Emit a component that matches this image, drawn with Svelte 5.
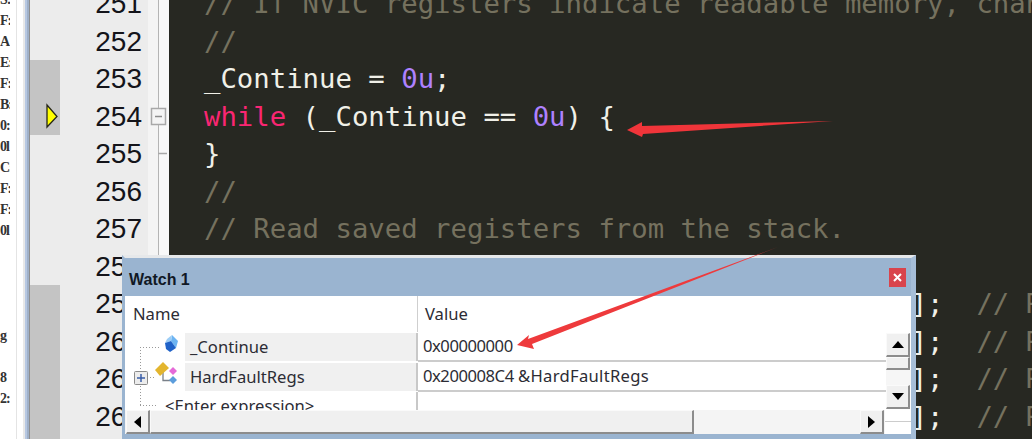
<script lang="ts">
	const disasm = ['S:', 'F:', 'A', 'E:', 'F:', 'B:', '0:', '0l', 'C:', 'F:', 'F:', '0l', '', '', '', '', 'g', '', '8', '2:', ''];

	const regLine = (i: number, note: string) => [
		[`HardFaultRegs.SavedRegs.r${i}       = pStack[${i}];  `, ''],
		[`// Register ${note}`, 'comment']
	];

	const lines = [
		{ n: 251, code: [['// If NVIC registers indicate readable memory, change the variable value to != 0 to continue execution.', 'comment']] },
		{ n: 252, code: [['//', 'comment']] },
		{ n: 253, mark: true, code: [['_Continue = ', ''], ['0u', 'literal'], [';', '']] },
		{ n: 254, mark: true, current: true, fold: true, code: [['while', 'keyword'], [' (_Continue == ', ''], ['0u', 'literal'], [') {', '']] },
		{ n: 255, foldEnd: true, code: [['}', '']] },
		{ n: 256, code: [['//', 'comment']] },
		{ n: 257, code: [['// Read saved registers from the stack.', 'comment']] },
		{ n: 258, code: [['//', 'comment']] },
		{ n: 259, mark: true, code: regLine(0, 'R0') },
		{ n: 260, mark: true, code: regLine(1, 'R1') },
		{ n: 261, mark: true, code: regLine(2, 'R2') },
		{ n: 262, mark: true, code: regLine(3, 'R3') },
		{ n: 263, mark: true, code: regLine(4, 'R12') }
	];
</script>

<div class="ide">
	<div class="disasm">
		{#each disasm as row}
			<div class="disasm-row">{row}</div>
		{/each}
	</div>
	<div class="sep"></div>

	<div class="editor">
		{#each lines as line}
			<div class="line">
				<div class="mark" class:on={line.mark}>
					{#if line.current}
						<svg viewBox="0 0 30 37" width="30" height="37">
							<polygon points="17,7 27,18.5 17,29" fill="#ffff00" stroke="#26261a" stroke-width="1.3" />
						</svg>
					{/if}
				</div>
				<div class="lineno">{line.n}</div>
				<div class="fold">
					{#if line.fold}
						<svg viewBox="0 0 21 37" width="21" height="37">
							<rect x="3.5" y="10.5" width="14" height="16" fill="#f4f4f4" stroke="#a8a8a8" stroke-width="1.5" />
							<line x1="7" y1="18.5" x2="14" y2="18.5" stroke="#8c8c8c" stroke-width="1.5" />
						</svg>
					{:else if line.foldEnd}
						<svg viewBox="0 0 21 37" width="21" height="37">
							<line x1="10" y1="18.5" x2="19" y2="18.5" stroke="#a8a8a8" stroke-width="1.5" />
						</svg>
					{/if}
				</div>
				<div class="code">{#each line.code as [text, kind]}<span class={kind}>{text}</span>{/each}</div>
			</div>
		{/each}
	</div>

	<div class="watch">
		<div class="title">
			<span>Watch 1</span>
			<button class="close" aria-label="Close">
				<svg viewBox="0 0 9 9" width="9" height="9">
					<path d="M1 1 L8 8 M8 1 L1 8" stroke="#fff" stroke-width="2" />
				</svg>
			</button>
		</div>
		<div class="body">
			<div class="list">
				<div class="table">
					<div class="head">
						<div class="head-name">Name</div>
						<div class="head-value">Value</div>
					</div>
					<div class="row">
						<div class="tree">
							<svg viewBox="0 0 60 30" width="60" height="30">
								<path d="M15.5 15 V30 M15 15.5 H36" stroke="#999" stroke-dasharray="1 2" fill="none" />
								<polygon points="47,3 53,9 51,16 46,9" fill="#6db4f2" />
								<polygon points="47,3 46,9 40,11 42,7" fill="#9ccdf6" />
								<polygon points="40,11 46,9 51,16 45,20 41,17" fill="#1f62c8" />
							</svg>
						</div>
						<div class="label">_Continue</div>
						<div class="value"><span class="hex">0x00000000</span></div>
					</div>
					<div class="row">
						<div class="tree">
							<svg viewBox="0 0 60 30" width="60" height="30">
								<path d="M15.5 0 V30 M22 15.5 H31" stroke="#999" stroke-dasharray="1 2" fill="none" />
								<rect x="9.5" y="9.5" width="13" height="13" rx="1" fill="#ececec" stroke="#8a8a8a" />
								<path d="M12 16 H20 M16 12 V20" stroke="#3a5ea8" stroke-width="1.5" />
								<path d="M38 9 V18.5 H45" stroke="#7a8088" stroke-width="1.3" fill="none" />
								<polygon points="38,0 44,6 35,14 30,8" fill="#e3b52e" />
								<polygon points="48,5 52,9 48,13 44,9" fill="#e56ad8" />
								<polygon points="48,14 52,18 48,22 44,18" fill="#5c9ddc" />
							</svg>
						</div>
						<div class="label">HardFaultRegs</div>
						<div class="value"><span class="hex">0x200008C4</span> <span class="ref">&amp;HardFaultRegs</span></div>
					</div>
					<div class="row last">
						<div class="tree">
							<svg viewBox="0 0 60 30" width="60" height="30">
								<path d="M15.5 0 V13 M15 13.5 H33" stroke="#999" stroke-dasharray="1 2" fill="none" />
							</svg>
						</div>
						<div class="label">&lt;Enter expression&gt;</div>
						<div class="value"></div>
					</div>
				</div>
				<div class="vscroll">
					<div class="btn v">
						<svg viewBox="0 0 12 7" width="12" height="7"><polygon points="6,0 12,7 0,7" fill="#000" /></svg>
					</div>
					<div class="btn thumb-v"></div>
					<div class="track-v"></div>
					<div class="btn v">
						<svg viewBox="0 0 12 7" width="12" height="7"><polygon points="0,0 12,0 6,7" fill="#000" /></svg>
					</div>
				</div>
			</div>
			<div class="hscroll">
				<div class="btn h">
					<svg viewBox="0 0 7 12" width="7" height="12"><polygon points="0,6 7,0 7,12" fill="#000" /></svg>
				</div>
				<div class="btn thumb-h"></div>
				<div class="track-h"></div>
				<div class="btn h">
					<svg viewBox="0 0 7 12" width="7" height="12"><polygon points="7,6 0,0 0,12" fill="#000" /></svg>
				</div>
				<div class="corner"></div>
			</div>
		</div>
	</div>

	<svg class="arrows" viewBox="0 0 1032 439" width="1032" height="439">
		<polygon points="627,130 642,122 642,126 833,121 643,134 642,137" fill="#f0353a" />
		<polygon points="517,345 529,335 528,339 778,247 532,344 534,349" fill="#ee3a3c" />
	</svg>
</div>

<style>
	:global(body) {
		margin: 0;
		background: #fff;
	}

	.ide {
		position: relative;
		display: flex;
		width: 1032px;
		height: 439px;
		overflow: hidden;
		background: #fff;
	}

	.disasm {
		width: 10px;
		flex-shrink: 0;
		margin-top: -11px;
		overflow: hidden;
		font-family: 'Liberation Serif', serif;
		font-size: 14px;
		font-weight: bold;
		letter-spacing: -1px;
		color: #333;
	}

	.disasm-row {
		height: 21px;
		line-height: 21px;
		white-space: nowrap;
	}

	.sep {
		width: 20px;
		flex-shrink: 0;
		background: linear-gradient(
			to right,
			#fff 0 6px,
			#e4e4e4 6px 7px,
			#fff 7px 13px,
			#e8e8e8 13px 15px,
			#b7c8e2 15px 17px,
			#9fb0c8 17px 19px,
			#8e8e8e 19px 20px
		);
	}

	.editor {
		flex: 1;
		min-width: 0;
		margin-top: -15px;
		background: #272822;
	}

	.line {
		display: flex;
		height: 37.5px;
		line-height: 37.5px;
	}

	.mark {
		width: 30px;
		flex-shrink: 0;
		background: #ececec;
	}

	.mark.on {
		background: #c4c4c4;
	}

	.mark svg,
	.fold svg {
		display: block;
	}

	.lineno {
		width: 88px;
		box-sizing: border-box;
		padding-right: 6px;
		flex-shrink: 0;
		text-align: right;
		background: #ececec;
		font-family: 'Liberation Sans', sans-serif;
		font-size: 28px;
		color: #14141a;
	}

	.fold {
		width: 21px;
		flex-shrink: 0;
		background: linear-gradient(to right, #f4f4f4 0 10px, #b4b4b4 10px 11px, #f8f8f8 11px 21px);
	}

	.code {
		flex: 1;
		min-width: 0;
		padding-left: 35px;
		overflow: hidden;
		white-space: pre;
		font-family: 'DejaVu Sans Mono', monospace;
		font-size: 27.3px;
		color: #f0f0e8;
	}

	.comment {
		color: #75715e;
	}

	.keyword {
		color: #f92672;
	}

	.literal {
		color: #ae81ff;
	}

	.watch {
		position: absolute;
		left: 122px;
		top: 255px;
		width: 794px;
		height: 184px;
		box-sizing: border-box;
		display: flex;
		flex-direction: column;
		border-top: 3px solid #e6e8ea;
		border-left: 3px solid #9ab4d0;
		border-right: 5px solid #a6bed8;
		background: #9ab4d0;
		font-family: 'Noto Sans', sans-serif;
		font-size: 16.6px;
		color: #2c2c34;
	}

	.title {
		display: flex;
		align-items: center;
		justify-content: space-between;
		flex-shrink: 0;
		height: 38px;
		box-sizing: border-box;
		padding: 0 5px 0 4px;
		font-family: 'Liberation Sans', sans-serif;
		font-weight: bold;
		font-size: 16px;
		color: #101824;
	}

	.title span {
		margin-top: 5px;
	}

	.close {
		display: flex;
		align-items: center;
		justify-content: center;
		width: 17px;
		height: 19px;
		padding: 0;
		border: none;
		background: #d9444c;
	}

	.body {
		display: flex;
		flex-direction: column;
		height: 138px;
		flex-shrink: 0;
		background: #fff;
	}

	.list {
		display: flex;
		height: 114px;
		flex-shrink: 0;
		overflow: hidden;
	}

	.table {
		flex: 1;
		min-width: 0;
	}

	.head {
		display: flex;
		height: 36px;
		line-height: 36px;
	}

	.head-name {
		width: 293px;
		box-sizing: border-box;
		padding-left: 8px;
		border-right: 1px solid #cfcfcf;
	}

	.head-value {
		padding-left: 7px;
	}

	.row {
		display: flex;
		height: 30px;
		line-height: 28px;
	}

	.tree {
		width: 60px;
		flex-shrink: 0;
	}

	.tree svg {
		display: block;
	}

	.label {
		width: 233px;
		box-sizing: border-box;
		margin-top: 1px;
		margin-bottom: 1px;
		padding-left: 5px;
		background: #f0f0f0;
		border-right: 2px solid #c8c8c8;
		white-space: nowrap;
	}

	.last .label {
		margin-left: -25px;
		width: 258px;
		margin-top: 0;
		background: #fff;
	}

	.value {
		flex: 1;
		padding-left: 5px;
		border-bottom: 2px solid #cccccc;
	}

	.last .value {
		border-bottom: none;
	}

	.hex {
		letter-spacing: -0.45px;
	}

	.ref {
		letter-spacing: 0.3px;
	}

	.btn {
		display: flex;
		align-items: center;
		justify-content: center;
		box-sizing: border-box;
		flex-shrink: 0;
		background: #f0f0f0;
		border-top: 1px solid #fafafa;
		border-left: 1px solid #fafafa;
		border-right: 2px solid #8c8c8c;
		border-bottom: 2px solid #8c8c8c;
	}

	.vscroll {
		display: flex;
		flex-direction: column;
		width: 25px;
		flex-shrink: 0;
		padding-top: 37px;
		box-sizing: border-box;
	}

	.v {
		width: 24px;
		height: 24px;
	}

	.thumb-v {
		width: 24px;
		height: 13px;
	}

	.track-v {
		width: 25px;
		height: 15px;
		background: #f6f6f6;
	}

	.hscroll {
		display: flex;
		height: 24px;
		flex-shrink: 0;
		padding-left: 1px;
		background: #f4f4f4;
	}

	.h {
		width: 24px;
		height: 24px;
	}

	.thumb-h {
		width: 544px;
		height: 24px;
	}

	.track-h {
		width: 166px;
	}

	.corner {
		flex: 1;
		margin-left: 1px;
		background: linear-gradient(to bottom, #fff 0 11px, #cccccc 11px 12px, #fff 12px);
	}

	.arrows {
		position: absolute;
		left: 0;
		top: 0;
		pointer-events: none;
	}
</style>
